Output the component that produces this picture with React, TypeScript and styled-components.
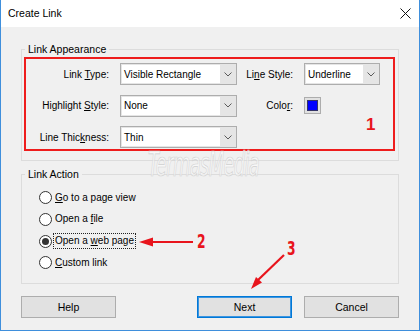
import styled, { createGlobalStyle } from "styled-components";

const GlobalStyle = createGlobalStyle`
  html, body {
    margin: 0;
    padding: 0;
    background: #ffffff;
  }
  * {
    box-sizing: border-box;
  }
`;

const Window = styled.div`
  position: relative;
  width: 420px;
  height: 331px;
  border: 1px solid #3f8fdc;
  border-top: none;
  background: #f0f0f0;
  display: flex;
  flex-direction: column;
  font-family: "Liberation Sans", Arial, sans-serif;
  font-size: 10px;
  color: #000;
  overflow: hidden;
`;

const TitleBar = styled.div`
  height: 27px;
  flex-shrink: 0;
  background: #ffffff;
  display: flex;
  align-items: center;
  justify-content: space-between;
  padding: 0 8px 1px 7px;
`;

const Title = styled.span`
  font-size: 10.5px;
`;

const CloseIcon = () => (
  <svg width="11" height="11" viewBox="0 0 11 11">
    <path d="M0.5 0.5 L10.5 10.5 M10.5 0.5 L0.5 10.5" stroke="#111" strokeWidth="1" fill="none" />
  </svg>
);

const Body = styled.div`
  flex: 1;
  display: flex;
  flex-direction: column;
  padding: 14px 20px 16px 20px;
`;

const Group = styled.fieldset<{ $gap?: number }>`
  margin: ${(p) => p.$gap ?? 0}px 0 0 0;
  padding: 0 3px 9px 2px;
  border: 1px solid #dcdcdc;
  min-width: 0;
`;

const Legend = styled.legend`
  padding: 0 3px;
  margin-left: 1px;
  line-height: 16px;
  font-size: 10.5px;
`;

const Highlight = styled.div`
  border: 2px solid #ee1c1c;
  padding: 4px 0 1px 0;
  display: grid;
  grid-template-columns: 94px 117px 67px 76px;
  grid-auto-rows: 22px;
  row-gap: 9.5px;
`;

const FieldLabel = styled.span`
  align-self: center;
  text-align: right;
  padding-right: 11px;
  white-space: nowrap;
`;

const U = styled.span`
  text-decoration: underline;
  text-underline-offset: 1px;
`;

const Combo = styled.div`
  display: flex;
  height: 22px;
  border: 1px solid #adadad;
  background: #e5e5e5;
  padding: 1px 0 1px 1px;
`;

const ComboValue = styled.div`
  flex: 1;
  background: #ffffff;
  display: flex;
  align-items: center;
  padding-left: 2px;
  white-space: nowrap;
  overflow: hidden;
`;

const ComboArrow = styled.div`
  width: 16px;
  display: flex;
  align-items: center;
  justify-content: center;
`;

const Chevron = () => (
  <svg width="8" height="5" viewBox="0 0 8 5">
    <path d="M0.5 0.5 L4 4 L7.5 0.5" stroke="#5a5a5a" strokeWidth="1" fill="none" />
  </svg>
);

const Dropdown = ({ value }: { value: string }) => (
  <Combo>
    <ComboValue>{value}</ComboValue>
    <ComboArrow>
      <Chevron />
    </ComboArrow>
  </Combo>
);

const ColorWell = styled.div`
  align-self: center;
  width: 17px;
  height: 17px;
  border: 1px solid #adadad;
  background: #e1e1e1;
  display: flex;
  align-items: center;
  justify-content: center;
`;

const ColorChip = styled.div<{ $color: string }>`
  width: 11px;
  height: 11px;
  background: ${(p) => p.$color};
  border: 1px solid #333366;
`;

const RadioList = styled.div`
  display: flex;
  flex-direction: column;
  padding: 5px 0 0 15px;
`;

const RadioRow = styled.div`
  height: 21.67px;
  display: flex;
  align-items: center;
  gap: 1px;
`;

const RadioCircle = styled.span<{ $checked?: boolean }>`
  width: 13px;
  height: 13px;
  border-radius: 50%;
  border: 1px solid #333333;
  background: #ffffff;
  display: flex;
  align-items: center;
  justify-content: center;

  &::after {
    content: "";
    width: 7px;
    height: 7px;
    border-radius: 50%;
    background: ${(p) => (p.$checked ? "#333333" : "transparent")};
  }
`;

const RadioLabel = styled.span<{ $focused?: boolean }>`
  padding: 1px 1px 2px 1px;
  border: 1px dotted ${(p) => (p.$focused ? "#222" : "transparent")};
  white-space: nowrap;
`;

const Footer = styled.div`
  display: flex;
  justify-content: space-between;
  margin-top: 12px;
`;

const ButtonGroup = styled.div`
  display: flex;
  gap: 12px;
`;

const Button = styled.button<{ $default?: boolean }>`
  width: 95px;
  height: 22px;
  font-family: "Liberation Sans", Arial, sans-serif;
  font-size: 10.5px;
  color: #000;
  background: #e1e1e1;
  border: 1px solid ${(p) => (p.$default ? "#0078d7" : "#adadad")};
  box-shadow: ${(p) => (p.$default ? "inset 0 0 0 1px #3c95e0" : "none")};
  padding: 0;
`;

const Watermark = styled.div`
  position: absolute;
  left: 147px;
  top: 145px;
  font-family: "DejaVu Sans", sans-serif;
  font-stretch: condensed;
  font-size: 33px;
  font-style: italic;
  letter-spacing: -1px;
  color: rgba(255, 255, 255, 0.55);
  -webkit-text-stroke: 0.7px #d0d0d0;
  transform: scaleX(0.6);
  transform-origin: left top;
  pointer-events: none;
  white-space: nowrap;
`;

const Marker = styled.span<{ $x: number; $y: number; $narrow?: boolean }>`
  position: absolute;
  left: ${(p) => p.$x}px;
  top: ${(p) => p.$y}px;
  color: #e8141c;
  font-family: ${(p) => (p.$narrow ? '"DejaVu Sans", sans-serif' : '"Liberation Sans", Arial, sans-serif')};
  font-stretch: condensed;
  font-weight: bold;
  font-size: ${(p) => (p.$narrow ? 19 : 17)}px;
  line-height: 1;
  transform: ${(p) => (p.$narrow ? "scaleX(0.72)" : "none")};
  transform-origin: left top;
`;

const Arrows = styled.svg`
  position: absolute;
  left: 0;
  top: 0;
  pointer-events: none;
`;

export default function App() {
  return (
    <>
      <GlobalStyle />
      <Window>
        <TitleBar>
          <Title>Create Link</Title>
          <CloseIcon />
        </TitleBar>
        <Body>
          <Group>
            <Legend>Link Appearance</Legend>
            <Highlight>
              <FieldLabel>
                Link <U>T</U>ype:
              </FieldLabel>
              <Dropdown value="Visible Rectangle" />
              <FieldLabel>
                Li<U>n</U>e Style:
              </FieldLabel>
              <Dropdown value="Underline" />

              <FieldLabel>
                Highlight <U>S</U>tyle:
              </FieldLabel>
              <Dropdown value="None" />
              <FieldLabel>
                Colo<U>r</U>:
              </FieldLabel>
              <ColorWell>
                <ColorChip $color="#0000ff" />
              </ColorWell>

              <FieldLabel>
                Line Thic<U>k</U>ness:
              </FieldLabel>
              <Dropdown value="Thin" />
            </Highlight>
          </Group>

          <Group $gap={5}>
            <Legend>Link Action</Legend>
            <RadioList>
              <RadioRow>
                <RadioCircle />
                <RadioLabel>
                  <U>G</U>o to a page view
                </RadioLabel>
              </RadioRow>
              <RadioRow>
                <RadioCircle />
                <RadioLabel>
                  Open a <U>f</U>ile
                </RadioLabel>
              </RadioRow>
              <RadioRow>
                <RadioCircle $checked />
                <RadioLabel $focused>
                  Open a <U>w</U>eb page
                </RadioLabel>
              </RadioRow>
              <RadioRow>
                <RadioCircle />
                <RadioLabel>
                  <U>C</U>ustom link
                </RadioLabel>
              </RadioRow>
            </RadioList>
          </Group>

          <Footer>
            <Button>Help</Button>
            <ButtonGroup>
              <Button $default>Next</Button>
              <Button>Cancel</Button>
            </ButtonGroup>
          </Footer>
        </Body>

        <Watermark>TermasMedia</Watermark>

        <Arrows width="420" height="331" viewBox="0 0 420 331">
          <line x1="150" y1="242" x2="192" y2="242" stroke="#e8141c" strokeWidth="2.2" />
          <polygon points="138,242 152,237.5 152,246.5" fill="#e8141c" />
          <line x1="283" y1="255" x2="257" y2="280" stroke="#e8141c" strokeWidth="2.2" />
          <polygon points="250,289 261,282.5 255,277" fill="#e8141c" />
        </Arrows>
        <Marker $x={365} $y={116}>1</Marker>
        <Marker $x={196} $y={232} $narrow>2</Marker>
        <Marker $x={286} $y={239} $narrow>3</Marker>
      </Window>
    </>
  );
}
